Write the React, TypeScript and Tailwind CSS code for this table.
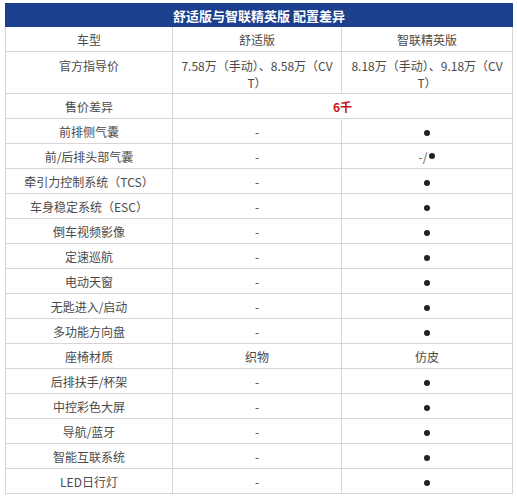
import React from "react";

const rows: [string, string, string][] = [
  ["前排侧气囊", "-", "●"],
  ["前/后排头部气囊", "-", "-/●"],
  ["牵引力控制系统（TCS）", "-", "●"],
  ["车身稳定系统（ESC）", "-", "●"],
  ["倒车视频影像", "-", "●"],
  ["定速巡航", "-", "●"],
  ["电动天窗", "-", "●"],
  ["无匙进入/启动", "-", "●"],
  ["多功能方向盘", "-", "●"],
  ["座椅材质", "织物", "仿皮"],
  ["后排扶手/杯架", "-", "●"],
  ["中控彩色大屏", "-", "●"],
  ["导航/蓝牙", "-", "●"],
  ["智能互联系统", "-", "●"],
  ["LED日行灯", "-", "●"],
];

const cell = "border border-[#d6d6d6] h-[25px] px-2 py-0 text-center align-middle";

function Dot() {
  return <span aria-label="●" className="inline-block h-[6px] w-[6px] rounded-full bg-[#222] align-middle" />;
}

function Mark({ v }: { v: string }) {
  if (v === "●") return <Dot />;
  if (v === "-/●")
    return (
      <span className="inline-flex items-center gap-[2px] text-[#555]">
        -/<Dot />
      </span>
    );
  return <span>{v}</span>;
}

export default function App() {
  return (
    <div className="min-h-screen bg-white px-[5px] pt-[3px] font-['Noto_Sans_CJK_SC','Noto_Sans',sans-serif] text-[12px] leading-[17px] text-[#4a4a4a]">
      <table className="w-[507px] table-fixed border-collapse">
        <colgroup>
          <col className="w-[167px]" />
          <col className="w-[169px]" />
          <col className="w-[171px]" />
        </colgroup>
        <tbody>
          <tr>
            <td
              colSpan={3}
              className="h-[23px] border border-[#1c3f8e] bg-[#1c3f8e] text-center align-middle text-[13px] font-bold text-white"
            >
              舒适版与智联精英版 配置差异
            </td>
          </tr>
          <tr>
            <td className={cell}>车型</td>
            <td className={cell}>舒适版</td>
            <td className={cell}>智联精英版</td>
          </tr>
          <tr>
            <td className="h-[42px] border border-[#d6d6d6] px-2 pt-[5px] text-center align-top">官方指导价</td>
            <td className="h-[42px] border border-[#d6d6d6] px-2 pt-[5px] text-center align-top">
              7.58万（手动）、8.58万（CV
              <br />
              T）
            </td>
            <td className="h-[42px] border border-[#d6d6d6] px-2 pt-[5px] text-center align-top">
              8.18万（手动）、9.18万（CV
              <br />
              T）
            </td>
          </tr>
          <tr>
            <td className={cell}>售价差异</td>
            <td colSpan={2} className={`${cell} font-bold text-[#c0181a]`}>
              6千
            </td>
          </tr>
          {rows.map(([label, a, b]) => (
            <tr key={label}>
              <td className={cell}>{label}</td>
              <td className={cell}>
                <Mark v={a} />
              </td>
              <td className={cell}>
                <Mark v={b} />
              </td>
            </tr>
          ))}
        </tbody>
      </table>
    </div>
  );
}
